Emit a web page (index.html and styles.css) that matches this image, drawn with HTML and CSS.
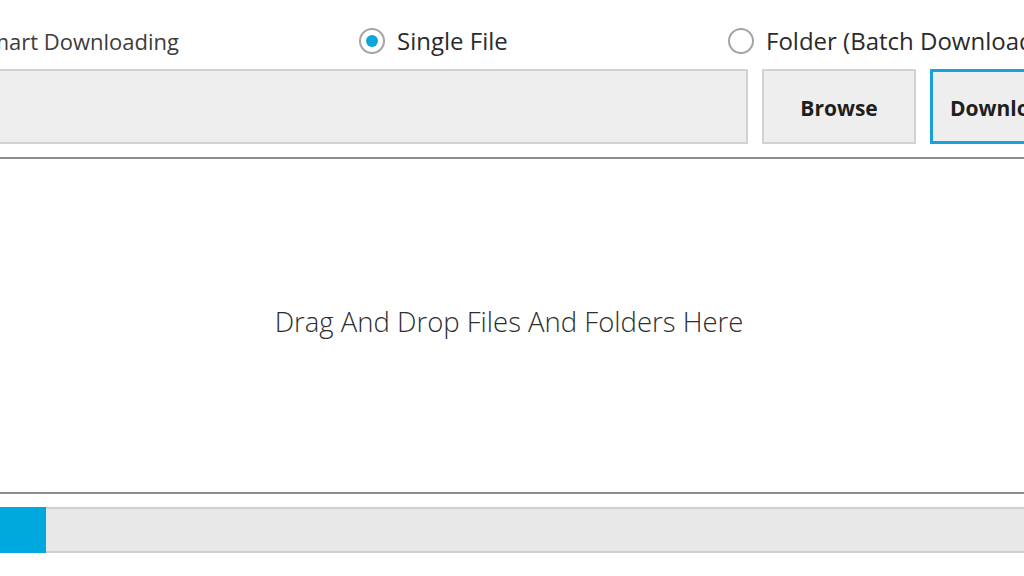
FILE: index.html
```html
<!DOCTYPE html>
<html>
<head>
<meta charset="utf-8">
<link rel="stylesheet" href="styles.css">
</head>
<body>
<div class="app">
  <div class="options">
    <label class="opt opt-smart">Smart Downloading</label>
    <label class="opt opt-single"><span class="radio checked"></span>Single File</label>
    <label class="opt opt-folder"><span class="radio"></span>Folder (Batch Download)</label>
  </div>
  <div class="pathrow">
    <div class="path"></div>
    <button class="btn">Browse</button>
    <button class="btn btn-primary">Download</button>
  </div>
  <div class="drop">Drag And Drop Files And Folders Here</div>
  <div class="progress"><div class="fill" style="width: 46px"></div></div>
</div>
</body>
</html>
```
FILE: styles.css
```css
html, body {
  margin: 0;
  padding: 0;
  width: 1024px;
  height: 576px;
  overflow: hidden;
  background: #ffffff;
}
body {
  font-family: "Open Sans", "Noto Sans", sans-serif;
  color: #2b2b2b;
}
.app {
  width: 1024px;
  display: flex;
  flex-direction: column;
}
.options {
  height: 69px;
  box-sizing: border-box;
  padding-top: 12px;
  display: grid;
  grid-template-columns: 359px 369px 1fr;
  align-items: center;
}
.opt {
  display: flex;
  align-items: center;
  font-size: 24px;
  white-space: nowrap;
}
.opt-smart {
  width: 179px;
  justify-content: flex-end;
  color: #3c3c3c;
  font-size: 22px;
}
.radio {
  width: 26px;
  height: 26px;
  border: 2px solid #a4a4a4;
  border-radius: 50%;
  box-sizing: border-box;
  margin-right: 12px;
  display: flex;
  align-items: center;
  justify-content: center;
  flex: none;
}
.radio.checked::after {
  content: "";
  width: 12px;
  height: 12px;
  border-radius: 50%;
  background: #0ea5dd;
}
.pathrow {
  display: flex;
  gap: 14px;
  height: 75px;
  margin-left: -30px;
}
.path {
  width: 778px;
  flex: none;
  box-sizing: border-box;
  background: #eeeeee;
  border: 2px solid #d2d2d2;
}
.btn {
  width: 154px;
  flex: none;
  box-sizing: border-box;
  background: #eeeeee;
  border: 2px solid #d2d2d2;
  font-family: "Open Sans", "Noto Sans", sans-serif;
  font-weight: 700;
  font-size: 21px;
  color: #1e1e1e;
  padding: 2px 0 0 0;
}
.btn-primary {
  border: 3px solid #17a3d9;
  text-align: left;
  padding-left: 17px;
}
.drop {
  margin-top: 13px;
  height: 337px;
  box-sizing: border-box;
  border-top: 2px solid #8c8c8c;
  border-bottom: 2px solid #8c8c8c;
  display: flex;
  align-items: center;
  justify-content: center;
  font-size: 27.5px;
  font-weight: 300;
  color: #2e2e2e;
  padding: 0 6px 8px 0;
}
.progress {
  margin-top: 13px;
  height: 46px;
  box-sizing: border-box;
  background: #e8e8e8;
  border-top: 2px solid #d0d0d0;
  border-bottom: 2px solid #d0d0d0;
  display: flex;
}
.fill {
  background: #00a9dd;
  margin: -2px 0;
}
```
